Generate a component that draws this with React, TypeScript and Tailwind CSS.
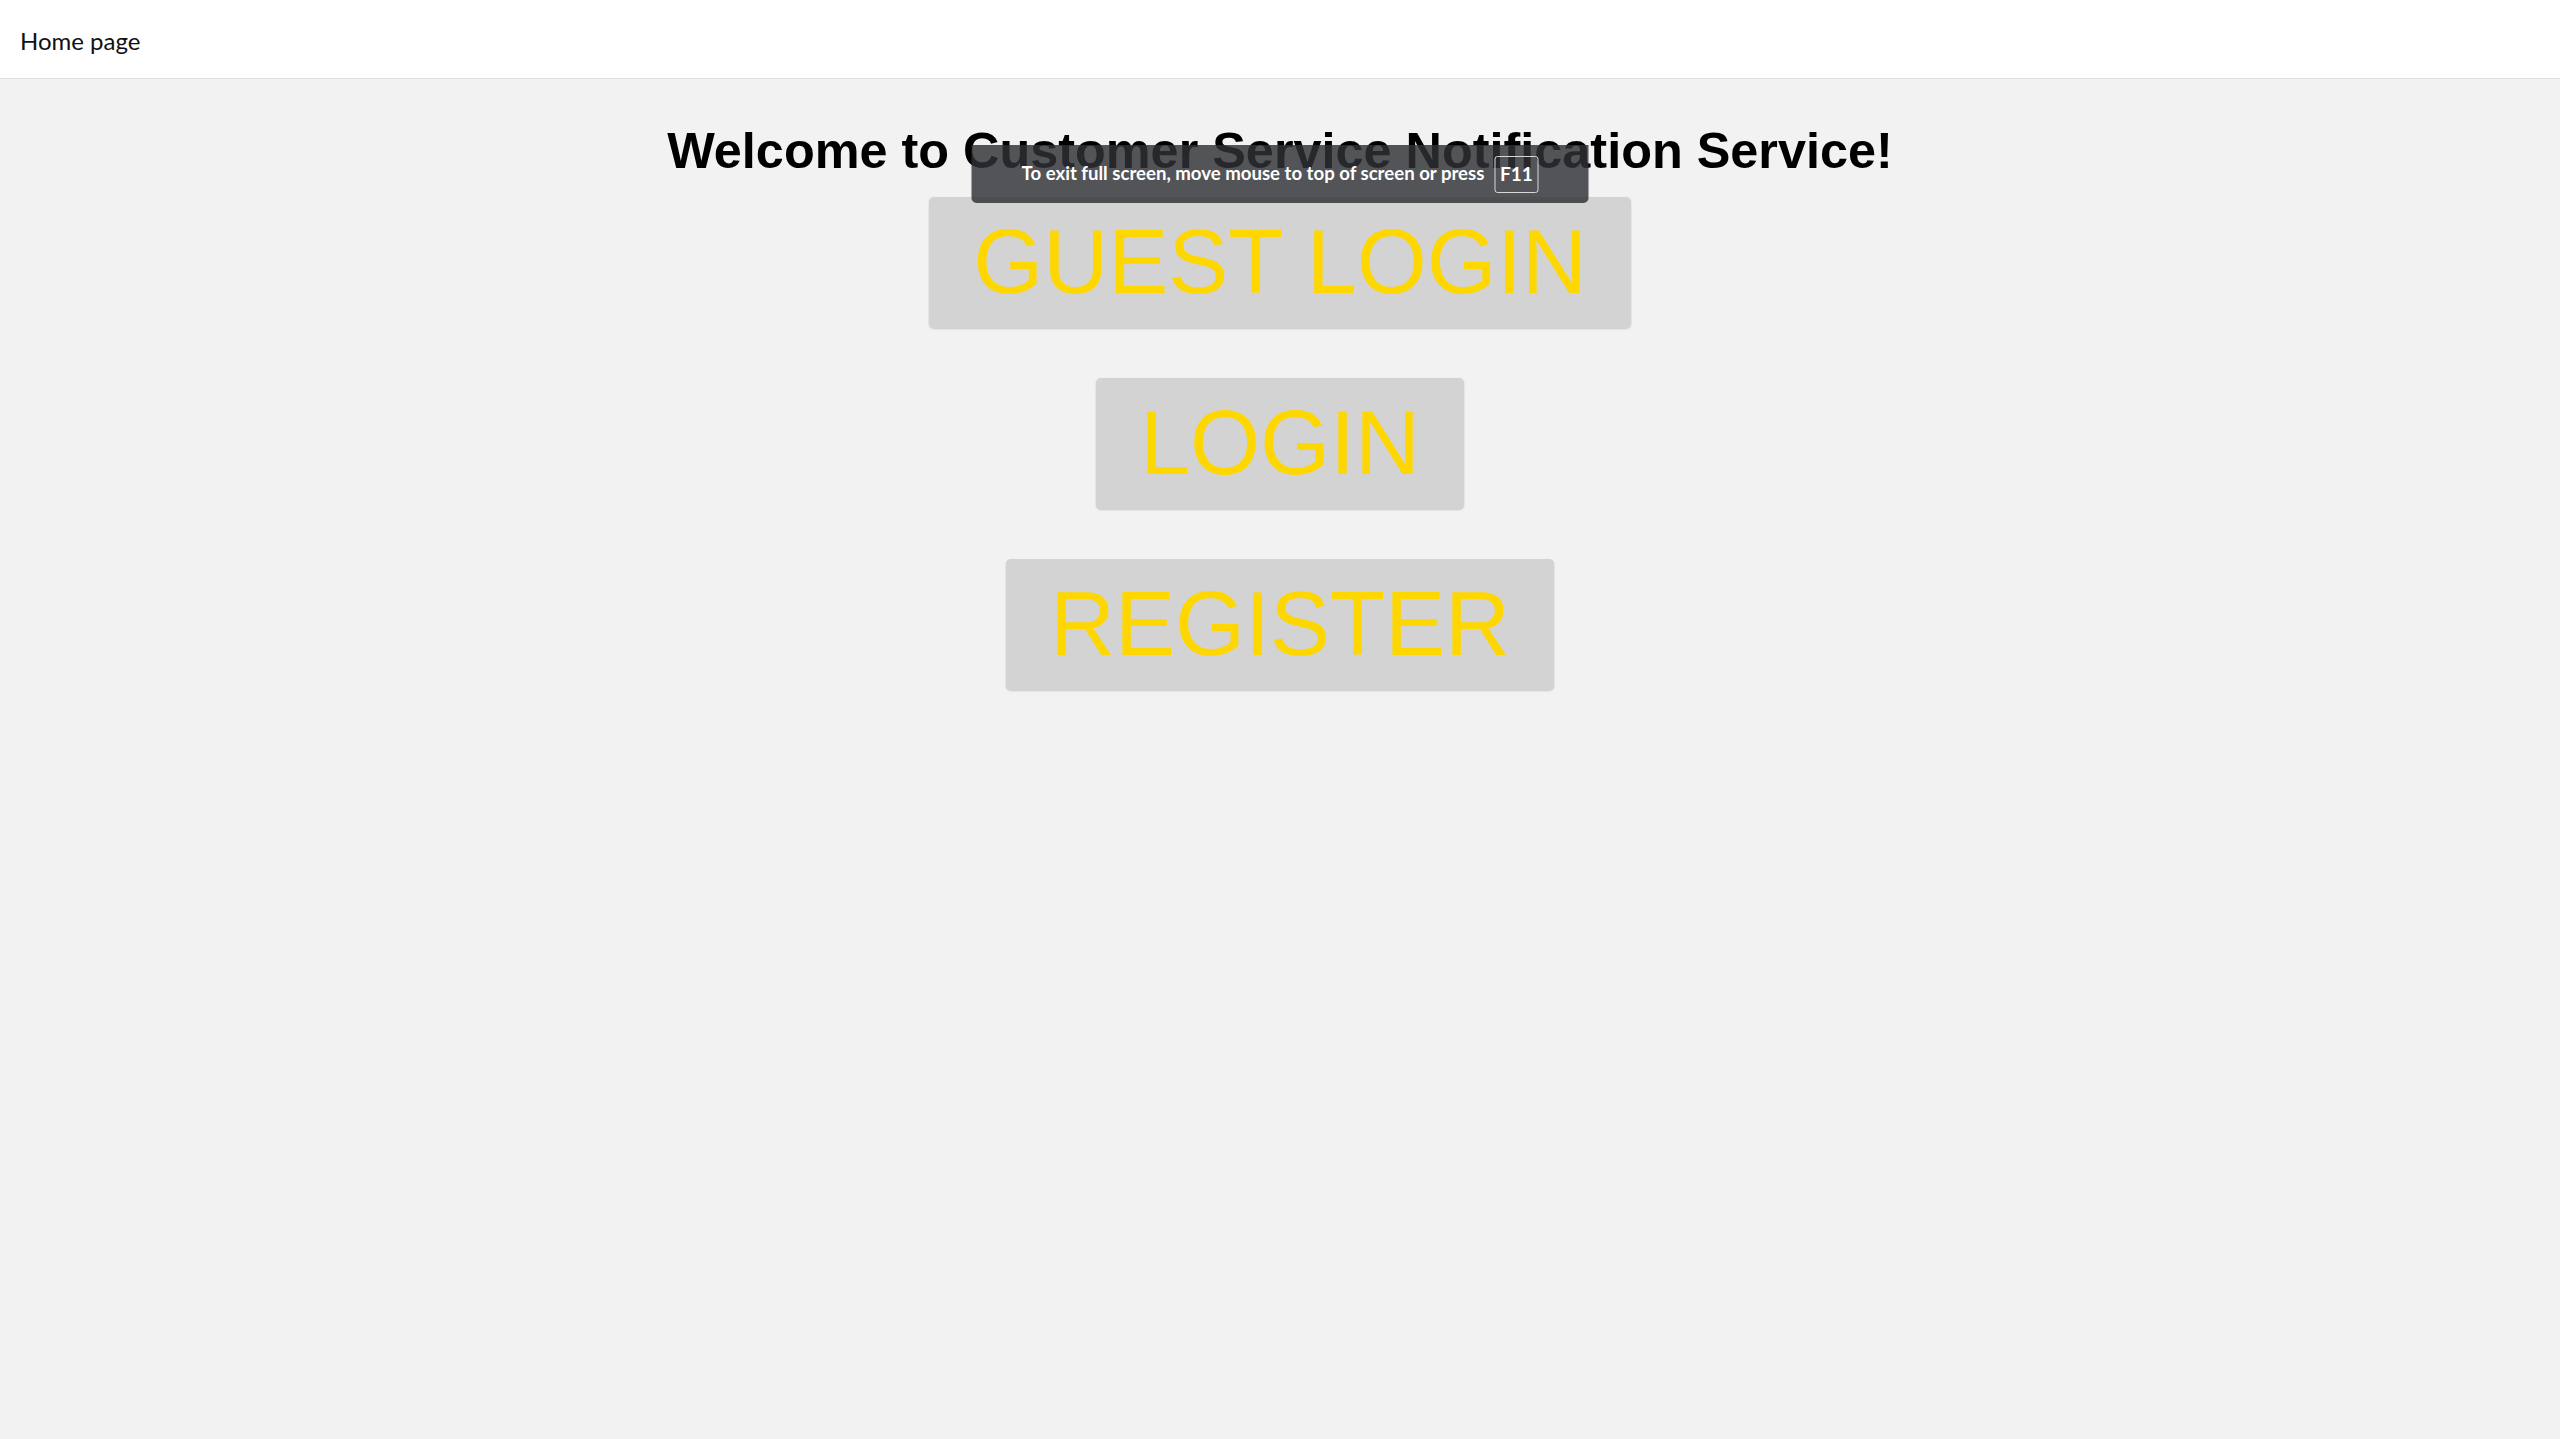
import React from 'react'

/**
 * Home page with three big login/register buttons and the
 * browser full-screen hint floating over the heading.
 */

const buttons = ['GUEST LOGIN', 'LOGIN', 'REGISTER']

function FullscreenHint() {
  return (
    <div className="absolute left-1/2 top-[145px] flex h-[58px] w-[617px] -translate-x-1/2 items-center justify-center gap-[10px] rounded-b-[5px] bg-[rgba(46,49,54,0.82)] font-['Lato',sans-serif] text-[18.6px] font-bold text-white">
      <span>To exit full screen, move mouse to top of screen or press</span>
      <span className="flex h-[37px] w-[44px] items-center justify-center rounded-[3px] border border-[#d8d8d8] text-[19px]">
        F11
      </span>
    </div>
  )
}

export default function App() {
  return (
    <div className="relative min-h-screen bg-[#f2f2f2]">
      <header className="h-[79px] border-b border-[#dcdcdc] bg-white pl-5 pt-[26px] font-['Lato',sans-serif] text-[24px] leading-[29px] text-[#111]">
        Home page
      </header>

      <main className="flex flex-col items-center font-['Liberation_Sans',Arial,sans-serif]">
        <h1 className="mt-[43px] text-[50.4px] font-bold leading-[57px] text-black">
          Welcome to Customer Service Notification Service!
        </h1>
        <div className="mt-[18px] flex flex-col items-center gap-[50px]">
          {buttons.map(label => (
            <button
              key={label}
              className="rounded-[5px] bg-[#d3d3d3] px-[44px] py-[14px] text-[90px] leading-[103px] text-[#ffd700] shadow-[0_1px_2px_rgba(0,0,0,0.18)]"
            >
              {label}
            </button>
          ))}
        </div>
      </main>

      <FullscreenHint />
    </div>
  )
}
